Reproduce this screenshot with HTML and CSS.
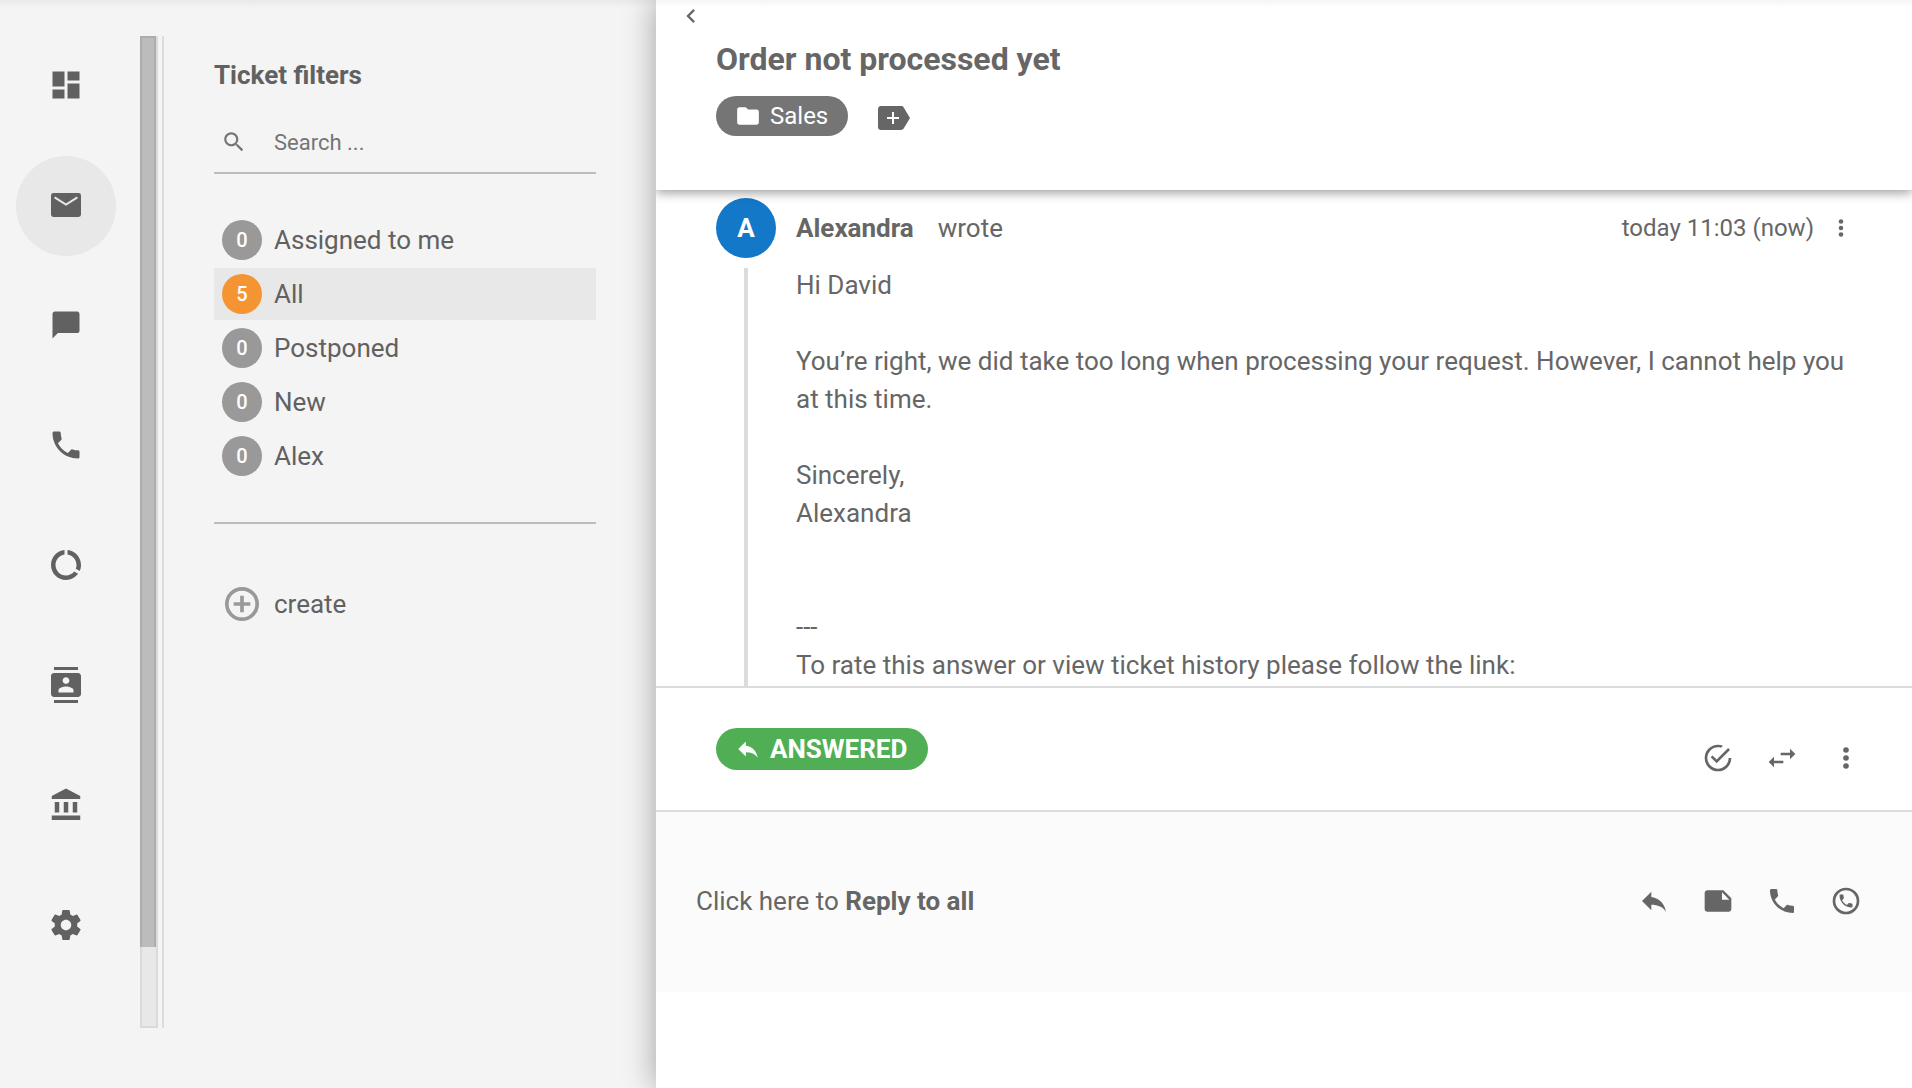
FILE: index.html
```
<!DOCTYPE html>
<html lang="en">
  <head>
    <meta charset="UTF-8" />
    <meta name="viewport" content="width=device-width, initial-scale=1.0" />
    <title>Order not processed yet</title>
    <link rel="stylesheet" href="styles.css">
  </head>
  <body>
    <svg class="sprite" aria-hidden="true">
      <symbol id="phone" viewBox="0 0 24 24">
        <path d="M6.62 10.79c1.44 2.83 3.76 5.14 6.59 6.59l2.2-2.2c.27-.27.67-.36 1.02-.24 1.12.37 2.33.57 3.57.57.55 0 1 .45 1 1V20c0 .55-.45 1-1 1-9.39 0-17-7.61-17-17 0-.55.45-1 1-1h3.5c.55 0 1 .45 1 1 0 1.25.2 2.45.57 3.57.11.35.03.74-.25 1.02l-2.2 2.2z" />
      </symbol>
      <symbol id="reply" viewBox="0 0 24 24">
        <path d="M10 9V5l-7 7 7 7v-4.1c5 0 8.5 1.6 11 5.1-1-5-4-10-11-11z" />
      </symbol>
      <symbol id="more" viewBox="0 0 24 24">
        <circle cx="12" cy="6" r="2.1" /><circle cx="12" cy="12" r="2.1" /><circle cx="12" cy="18" r="2.1" />
      </symbol>
    </svg>

    <div class="app">
      <div class="sidebar">
        <nav class="main-nav">
          <ul class="nav-list">
            <li>
              <a href="#" class="nav-link" aria-label="Dashboard">
                <svg class="icon-nav" viewBox="0 0 24 24"><path d="M3 13h8V3H3v10zm0 8h8v-6H3v6zm10 0h8V11h-8v10zm0-18v6h8V3h-8z" /></svg>
              </a>
            </li>
            <li>
              <a href="#" class="nav-link active" aria-label="Tickets">
                <svg class="icon-nav" viewBox="0 0 24 24">
                  <rect x="2" y="4" width="20" height="16" rx="1.6" />
                  <path class="flap" d="M4.4 6.9l7.6 4.8 7.6-4.8" />
                </svg>
              </a>
            </li>
            <li>
              <a href="#" class="nav-link" aria-label="Chats">
                <svg class="icon-nav" viewBox="0 0 24 24"><path d="M19.4 3H4.6C3.7 3 3 3.7 3 4.6V21l3.6-3.6h12.8c.9 0 1.6-.7 1.6-1.6V4.6c0-.9-.7-1.6-1.6-1.6z" /></svg>
              </a>
            </li>
            <li>
              <a href="#" class="nav-link" aria-label="Calls">
                <svg class="icon-nav"><use href="#phone" /></svg>
              </a>
            </li>
            <li>
              <a href="#" class="nav-link" aria-label="Reports">
                <svg class="icon-nav" viewBox="0 0 24 24"><path d="M13 2.05v3.03c3.39.49 6 3.39 6 6.92 0 .9-.18 1.75-.48 2.54l2.6 1.53c.56-1.24.88-2.62.88-4.07 0-5.18-3.95-9.45-9-9.95zM12 19c-3.87 0-7-3.13-7-7 0-3.53 2.61-6.43 6-6.92V2.05c-5.06.5-9 4.76-9 9.95 0 5.52 4.47 10 9.99 10 3.31 0 6.24-1.61 8.06-4.09l-2.6-1.53C16.17 17.98 14.21 19 12 19z" /></svg>
              </a>
            </li>
            <li>
              <a href="#" class="nav-link" aria-label="Contacts">
                <svg class="icon-nav" viewBox="0 0 24 24"><path d="M20 0H4v2h16V0zM4 24h16v-2H4v2zM20 4H4c-1.1 0-2 .9-2 2v12c0 1.1.9 2 2 2h16c1.1 0 2-.9 2-2V6c0-1.1-.9-2-2-2zm-8 2.75c1.24 0 2.25 1.01 2.25 2.25s-1.01 2.25-2.25 2.25S9.75 10.24 9.75 9 10.76 6.75 12 6.75zM17 17H7v-1.5c0-1.67 3.33-2.5 5-2.5s5 .83 5 2.5V17z" /></svg>
              </a>
            </li>
            <li>
              <a href="#" class="nav-link" aria-label="Companies">
                <svg class="icon-nav" viewBox="0 0 24 24"><path d="M4.5 10v7h3v-7h-3zm6 0v7h3v-7h-3zM2.500 22h19v-3h-19v3zm14-12v7h3v-7h-3zM12 1L2.500 6v2h19V6L12 1z" /></svg>
              </a>
            </li>
            <li>
              <a href="#" class="nav-link" aria-label="Settings">
                <svg class="icon-nav" viewBox="0 0 24 24"><path d="M19.43 12.98c.04-.32.07-.64.07-.98s-.03-.66-.07-.98l2.11-1.65c.19-.15.24-.42.12-.64l-2-3.46c-.12-.22-.39-.3-.61-.22l-2.49 1c-.52-.4-1.08-.73-1.69-.98l-.38-2.65C14.46 2.18 14.25 2 14 2h-4c-.25 0-.46.18-.49.42l-.38 2.65c-.61.25-1.17.59-1.69.98l-2.49-1c-.23-.09-.49 0-.61.22l-2 3.46c-.13.22-.07.49.12.64l2.11 1.65c-.04.32-.07.65-.07.98s.03.66.07.98l-2.11 1.65c-.19.15-.24.42-.12.64l2 3.46c.12.22.39.3.61.22l2.49-1c.52.4 1.08.73 1.69.98l.38 2.65c.03.24.24.42.49.42h4c.25 0 .46-.18.49-.42l.38-2.65c.61-.25 1.17-.59 1.69-.98l2.49 1c.23.09.49 0 .61-.22l2-3.46c.12-.22.07-.49-.12-.64l-2.11-1.65zM12 15.5c-1.93 0-3.5-1.57-3.5-3.5s1.57-3.5 3.5-3.5 3.5 1.57 3.5 3.5-1.57 3.5-3.5 3.5z" /></svg>
              </a>
            </li>
          </ul>
          <div class="scroll-track"><div class="scroll-thumb"></div></div>
        </nav>

        <section class="filters">
          <h2>Ticket filters</h2>
          <form class="search" role="search">
            <label for="search" aria-label="Search">
              <svg class="icon-sm" viewBox="0 0 24 24"><path d="M15.5 14h-.79l-.28-.27C15.41 12.59 16 11.11 16 9.5 16 5.91 13.09 3 9.5 3S3 5.91 3 9.5 5.91 16 9.5 16c1.61 0 3.09-.59 4.23-1.57l.27.28v.79l5 4.99L20.49 19l-4.99-5zm-6 0C7.01 14 5 11.99 5 9.5S7.01 5 9.5 5 14 7.01 14 9.5 11.99 14 9.5 14z" /></svg>
            </label>
            <input type="search" id="search" placeholder="Search ..." />
          </form>
          <ul class="filter-list">
            <li><a href="#" class="filter"><span class="badge">0</span>Assigned to me</a></li>
            <li><a href="#" class="filter selected"><span class="badge">5</span>All</a></li>
            <li><a href="#" class="filter"><span class="badge">0</span>Postponed</a></li>
            <li><a href="#" class="filter"><span class="badge">0</span>New</a></li>
            <li><a href="#" class="filter"><span class="badge">0</span>Alex</a></li>
          </ul>
          <button type="button" class="filter create">
            <svg class="icon-create" viewBox="0 0 24 24">
              <circle cx="12" cy="12" r="9.1" />
              <path d="M12 7v10M7 12h10" />
            </svg>
            create
          </button>
        </section>
      </div>

      <main class="ticket">
        <header class="ticket-header">
          <button type="button" class="back" aria-label="Back">
            <svg class="icon-back" viewBox="0 0 24 24"><path d="M15.4 7.4L14 6l-6 6 6 6 1.4-1.4-4.6-4.6z" /></svg>
          </button>
          <h1>Order not processed yet</h1>
          <div class="tags">
            <button type="button" class="pill">
              <svg class="icon-sm" viewBox="0 0 24 24"><path d="M10 4H4c-1.1 0-2 .9-2 2v12c0 1.1.9 2 2 2h16c1.1 0 2-.9 2-2V8c0-1.1-.9-2-2-2h-8l-2-2z" /></svg>
              Sales
            </button>
            <button type="button" class="add-tag" aria-label="Add tag">
              <svg class="icon-tag" viewBox="0 0 32 24">
                <path d="M3 0h20c1.2 0 2.1.5 2.7 1.4L32 12l-6.3 10.6c-.6.9-1.5 1.4-2.7 1.4H3c-1.7 0-3-1.3-3-3V3c0-1.7 1.3-3 3-3z" />
                <path class="plus" d="M15 6v12M9 12h12" />
              </svg>
            </button>
          </div>
        </header>

        <article class="message">
          <div class="thread">
            <div class="avatar">A</div>
            <div class="thread-line"></div>
          </div>
          <div class="message-main">
            <div class="message-head">
              <strong>Alexandra</strong>
              <span>wrote</span>
              <time>today 11:03 (now)</time>
              <button type="button" aria-label="Message menu">
                <svg class="icon-sm"><use href="#more" /></svg>
              </button>
            </div>
            <div class="message-body">
              Hi David<br /><br />
              You’re right, we did take too long when processing your request. However, I cannot help you at this time.<br /><br />
              Sincerely,<br />
              Alexandra<br /><br /><br />
              ---<br />
              To rate this answer or view ticket history please follow the link:
            </div>
          </div>
        </article>

        <section class="status-bar">
          <button type="button" class="pill answered">
            <svg class="icon-sm"><use href="#reply" /></svg>
            ANSWERED
          </button>
          <div class="actions">
            <button type="button" aria-label="Resolve">
              <svg class="icon" viewBox="0 0 24 24"><path d="M20 12A8 8 0 0 1 12 20A8 8 0 0 1 4 12A8 8 0 0 1 12 4C12.76 4 13.5 4.11 14.2 4.31L15.77 2.74C14.61 2.26 13.34 2 12 2A10 10 0 0 0 2 12A10 10 0 0 0 12 22A10 10 0 0 0 22 12M7.91 10.08L6.5 11.5L11 16L21 6L19.59 4.58L11 13.17L7.91 10.08Z" /></svg>
            </button>
            <button type="button" aria-label="Transfer">
              <svg class="icon" viewBox="0 0 24 24"><path d="M22 9l-4-4v3h-7v2h7v3zM6 11l-4 4 4 4v-3h7v-2H6z" /></svg>
            </button>
            <button type="button" aria-label="More">
              <svg class="icon"><use href="#more" /></svg>
            </button>
          </div>
        </section>

        <section class="reply-bar">
          <button type="button" class="reply-all">Click here to <strong>Reply to all</strong></button>
          <div class="actions">
            <button type="button" aria-label="Reply">
              <svg class="icon"><use href="#reply" /></svg>
            </button>
            <button type="button" aria-label="Note">
              <svg class="icon" viewBox="0 0 24 24"><path d="M22 10l-6-6H4c-1.1 0-2 .9-2 2v12c0 1.1.9 2 2 2h16c1.1 0 2-.9 2-2v-8zm-7-4.5l5.5 5.5H15V5.500z" /></svg>
            </button>
            <button type="button" aria-label="Call">
              <svg class="icon"><use href="#phone" /></svg>
            </button>
            <button type="button" aria-label="WhatsApp">
              <svg class="icon" viewBox="0 0 24 24">
                <circle class="ring" cx="12" cy="12" r="9" />
                <use href="#phone" x="5.5" y="5.5" width="13" height="13" />
              </svg>
            </button>
          </div>
        </section>
      </main>
    </div>
  </body>
</html>
```
FILE: styles.css
```
* {
  box-sizing: border-box;
}
body {
  margin: 0;
  font-family: Roboto, "Liberation Sans", sans-serif;
  font-size: 26px;
  color: #666;
  background: #f4f4f4;
}
h1,
h2,
ul {
  margin: 0;
  padding: 0;
}
ul {
  list-style: none;
}
a {
  color: inherit;
  text-decoration: none;
}
button {
  padding: 0;
  border: none;
  background: none;
  font: inherit;
  color: inherit;
  cursor: pointer;
}
svg {
  display: block;
  fill: currentColor;
}
.sprite {
  position: absolute;
  width: 0;
  height: 0;
}
.icon {
  width: 32px;
  height: 32px;
}
.icon-sm {
  width: 26px;
  height: 26px;
}
.icon-nav {
  width: 36px;
  height: 36px;
}
.icon-back {
  width: 28px;
  height: 28px;
}
.icon-tag {
  width: 32px;
  height: 24px;
}
.app {
  display: flex;
  height: 100vh;
}

/* Left side: icon navigation and ticket filters */
.sidebar {
  display: flex;
  flex: 0 0 656px;
  background: linear-gradient(#e9e9e9, #f4f4f4 8px);
  color: #616161;
}
.main-nav {
  display: flex;
  justify-content: space-between;
  width: 164px;
  margin: 36px 0 60px;
  padding: 0 4px 0 16px;
  border-right: 2px solid #dcdcdc;
}
.nav-list {
  display: flex;
  flex-direction: column;
  gap: 20px;
  overflow: hidden;
}
.nav-link {
  display: flex;
  align-items: center;
  justify-content: center;
  width: 100px;
  height: 100px;
  padding-bottom: 2px;
  border-radius: 50%;
}
.nav-link.active {
  background: #e8e8e8;
}
.flap {
  fill: none;
  stroke: #e8e8e8;
  stroke-width: 1.3;
}
.scroll-track {
  width: 18px;
  background: #e8e8e8;
  border: 2px solid #dadada;
  border-top: none;
}
.scroll-thumb {
  width: 16px;
  height: 92%;
  margin-left: -2px;
  background: #bcbcbc;
  border: 2px solid #adadad;
  border-bottom: none;
}
.filters {
  flex: 1;
  padding: 60px 60px 0 50px;
}
.filters h2 {
  font-size: 26px;
  line-height: 30px;
}
.search {
  display: flex;
  align-items: center;
  gap: 27px;
  height: 62px;
  margin-top: 22px;
  padding-left: 7px;
  border-bottom: 2px solid #bdbdbd;
  color: #757575;
}
.search input {
  flex: 1;
  min-width: 0;
  padding: 0;
  border: none;
  outline: none;
  background: none;
  font: inherit;
  font-size: 22px;
}
.search input::placeholder {
  color: #757575;
}
.filter-list {
  display: flex;
  flex-direction: column;
  gap: 2px;
  padding: 40px 0;
  border-bottom: 2px solid #bdbdbd;
}
.filter {
  display: flex;
  align-items: center;
  gap: 12px;
  height: 52px;
  padding-left: 8px;
  line-height: 30px;
}
.badge {
  width: 40px;
  border-radius: 50%;
  background: #999;
  color: white;
  font-size: 20px;
  font-weight: 500;
  line-height: 40px;
  text-align: center;
}
.filter.selected {
  background: #e8e8e8;
}
.filter.selected .badge {
  background: #f59433;
}
.create {
  margin-top: 54px;
}
.icon-create {
  width: 40px;
  height: 40px;
  fill: none;
  stroke: #999;
  stroke-width: 2.2;
}

/* Ticket */
.ticket {
  display: flex;
  flex: 1;
  flex-direction: column;
  min-width: 0;
  padding-bottom: 96px;
  background: white;
  box-shadow: 0 0 30px rgba(0, 0, 0, 0.35);
}
.ticket-header {
  z-index: 1;
  padding: 2px 60px 54px;
  background: linear-gradient(#f6f6f6, white 8px);
  box-shadow: 0 3px 10px rgba(0, 0, 0, 0.38);
  clip-path: inset(0 0 -20px 0);
}
.back {
  display: block;
  margin-left: -39px;
}
h1 {
  margin-top: 10px;
  font-size: 32px;
  line-height: 38px;
}
.tags {
  display: flex;
  align-items: center;
  gap: 30px;
  margin-top: 18px;
}
.add-tag {
  padding-top: 4px;
}
.pill {
  display: flex;
  align-items: center;
  gap: 9px;
  height: 40px;
  padding: 0 20px 0 19px;
  border-radius: 20px;
  background: #757575;
  color: white;
  font-size: 24px;
}
.plus {
  fill: none;
  stroke: white;
  stroke-width: 2;
}
.message {
  display: flex;
  flex: 1;
  gap: 20px;
  min-height: 0;
  padding: 8px 58px 0 60px;
  overflow: hidden;
}
.thread {
  display: flex;
  flex-direction: column;
}
.avatar {
  width: 60px;
  border-radius: 50%;
  background: #1478c8;
  color: white;
  font-weight: bold;
  line-height: 60px;
  text-align: center;
}
.thread-line {
  flex: 1;
  width: 4px;
  margin: 10px auto 0;
  background: #dcdcdc;
}
.message-main {
  flex: 1;
}
.message-head {
  display: flex;
  align-items: center;
  gap: 24px;
  height: 60px;
}
.message-head time {
  margin-left: auto;
  font-size: 24px;
}
.message-head button {
  margin-left: -10px;
}
.message-body {
  margin-top: 8px;
  line-height: 38px;
}
.status-bar,
.reply-bar {
  display: flex;
  align-items: center;
  justify-content: space-between;
  padding: 0 50px 0 60px;
}
.status-bar {
  height: 126px;
  padding-top: 18px;
  border: solid #dcdcdc;
  border-width: 2px 0;
}
.pill.answered {
  align-self: flex-start;
  height: 42px;
  margin-top: 22px;
  padding: 0 21px 0 19px;
  border-radius: 21px;
  background: #50ae55;
  font-size: 26px;
  font-weight: bold;
}
.actions {
  display: flex;
  gap: 32px;
}
.reply-bar {
  height: 180px;
  padding-bottom: 2px;
  padding-left: 40px;
  background: #fbfbfb;
}
.ring {
  fill: none;
  stroke: currentColor;
  stroke-width: 2;
}
```
